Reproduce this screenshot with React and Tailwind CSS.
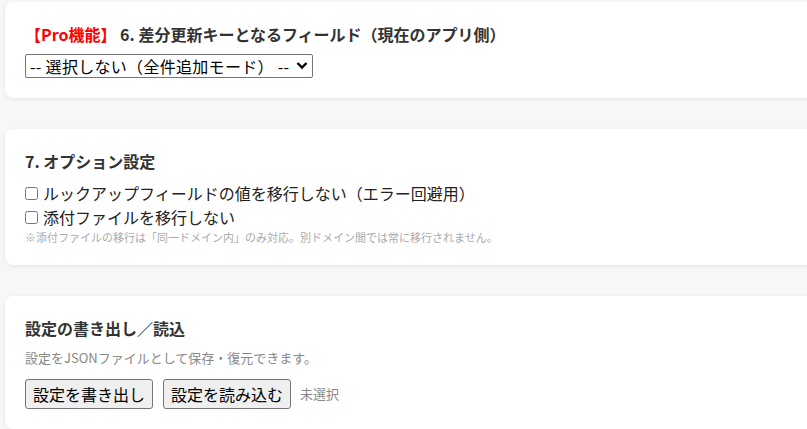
import React from 'react';

const font = { fontFamily: '"Noto Sans CJK JP", "Noto Sans", sans-serif' };

function Card({ children }) {
  return (
    <section className="w-[900px] bg-white rounded-lg shadow-[0_1px_4px_rgba(0,0,0,0.08)] p-5 mb-[31px]">
      {children}
    </section>
  );
}

export default function App() {
  return (
    <div
      className="h-[429px] overflow-hidden bg-[#f7f7f7] pl-[5px] pt-[2px] text-[#222]"
      style={font}
    >
      <Card>
        <h3 className="text-base font-bold leading-6 text-[#333] mb-2">
          <span className="text-[#f00]">【Pro機能】</span> 6. 差分更新キーとなるフィールド（現在のアプリ側）
        </h3>
        <div className="relative w-[288px] h-6">
          <select className="appearance-none w-full h-6 pl-[4px] pr-[20px] text-base leading-[22px] tracking-[0.3px] bg-white text-black border border-[#767676] rounded-[2px]">
            <option>-- 選択しない（全件追加モード） --</option>
          </select>
          <svg
            className="absolute right-[5px] top-[7px] pointer-events-none"
            width="12"
            height="9"
            viewBox="0 0 12 9"
          >
            <path d="M1.5 2 L6 6.5 L10.5 2" fill="none" stroke="#000" strokeWidth="2.4" />
          </svg>
        </div>
      </Card>

      <Card>
        <h3 className="text-base font-bold leading-6 text-[#333] mb-2">7. オプション設定</h3>
        <label className="flex items-center gap-[5px] h-6 text-base">
          <input type="checkbox" className="w-[13px] h-[13px]" />
          ルックアップフィールドの値を移行しない（エラー回避用）
        </label>
        <label className="flex items-center gap-[5px] h-6 text-base">
          <input type="checkbox" className="w-[13px] h-[13px]" />
          添付ファイルを移行しない
        </label>
        <p className="text-[11px] leading-4 text-[#aaa]">
          ※添付ファイルの移行は「同一ドメイン内」のみ対応。別ドメイン間では常に移行されません。
        </p>
      </Card>

      <Card>
        <h3 className="text-base font-bold leading-6 text-[#333] mb-2">設定の書き出し／読込</h3>
        <p className="text-[13px] leading-[20px] text-[#888] mb-[11px]">
          設定をJSONファイルとして保存・復元できます。
        </p>
        <div className="flex items-center gap-[10px]">
          <button className="text-base px-[7px] py-[2px] bg-[#efefef] text-black border border-[#767676] rounded-[3px]">
            設定を書き出し
          </button>
          <button className="text-base px-[7px] py-[2px] bg-[#efefef] text-black border border-[#767676] rounded-[3px]">
            設定を読み込む
          </button>
          <span className="text-[13px] text-[#888] -ml-[1px]">未選択</span>
        </div>
      </Card>
    </div>
  );
}
